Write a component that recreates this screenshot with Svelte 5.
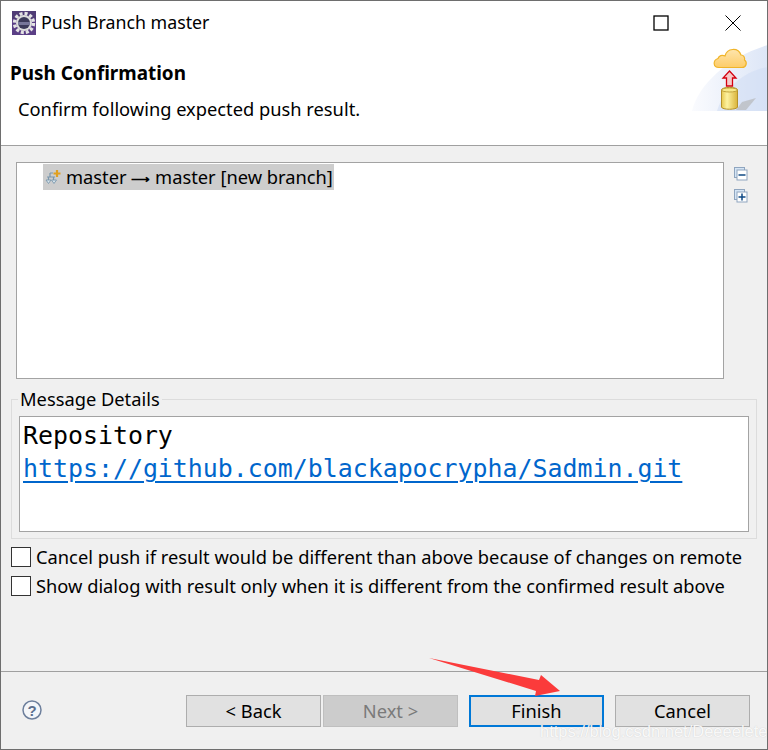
<script>
  const options = [
    'Cancel push if result would be different than above because of changes on remote',
    'Show dialog with result only when it is different from the confirmed result above'
  ];
  const buttons = [
    { label: '< Back' },
    { label: 'Next >', disabled: true },
    { label: 'Finish', primary: true },
    { label: 'Cancel' }
  ];
</script>

<div class="window">
  <div class="titlebar">
    <svg class="app-icon" width="24" height="24" viewBox="0 0 24 24">
      <rect width="24" height="24" fill="#5b3f86" />
      <path d="M0 0h24v8H0z" fill="#4a3a6c" opacity=".6" />
      <circle cx="12" cy="12" r="9.500" fill="none" stroke="#e4e4e4" stroke-width="3.400" stroke-dasharray="3 2" />
      <circle cx="12" cy="12" r="8" fill="#dcdcdc" />
      <circle cx="12" cy="12" r="6" fill="#3c3a5a" />
      <rect x="6" y="11" width="12" height="3" fill="#77769a" />
    </svg>
    <span class="title">Push Branch master</span>
    <div class="win-buttons">
      <svg width="16" height="16" viewBox="0 0 16 16"><rect x="1" y="1" width="14" height="14" fill="none" stroke="#000" stroke-width="1.300" /></svg>
      <svg width="16" height="16" viewBox="0 0 16 16"><path d="M.5.5l15 15M15.500.5l-15 15" stroke="#000" stroke-width="1" fill="none" /></svg>
    </div>
  </div>

  <div class="banner">
    <div class="banner-text">
      <h1>Push Confirmation</h1>
      <p>Confirm following expected push result.</p>
    </div>
    <svg class="wizard-art" width="75" height="68" viewBox="0 0 75 68">
      <defs>
        <linearGradient id="sky" x1="0" y1="0" x2="1" y2="0">
          <stop offset="0" stop-color="#fafbfe" />
          <stop offset="1" stop-color="#dde6f7" />
        </linearGradient>
        <linearGradient id="cloud" x1="0" y1="0" x2="0" y2="1">
          <stop offset="0" stop-color="#fee5ad" />
          <stop offset="1" stop-color="#fdcc68" />
        </linearGradient>
        <linearGradient id="can" x1="0" y1="0" x2="1" y2="0">
          <stop offset="0" stop-color="#e8c84e" />
          <stop offset=".35" stop-color="#fdf2a0" />
          <stop offset="1" stop-color="#d9b33a" />
        </linearGradient>
      </defs>
      <path d="M0 67C6 40 38 12 76 1v66z" fill="url(#sky)" />
      <path d="M25 67C32 44 52 27 76 23v44z" fill="#cfdcf4" opacity=".55" />
      <path d="M44 66l6-8 14-4-10 12z" fill="#b0b0b0" opacity=".6" />
      <path d="M27 23.500c-6 0-6.500-7-1-9 1-3 4-4 7-2.500 2-8 13-9 16-1 3 0 4 3 3.500 5 3 2 2 7.500-2.500 7.500z" fill="url(#cloud)" stroke="#f0b429" stroke-width="1.200" />
      <path d="M37.500 27l6.500 7h-3.500v8h-6v-8H31z" fill="#f6c9c9" stroke="#d4000f" stroke-width="1.300" />
      <path d="M29.500 46c0-3.500 16-3.500 16 0v17c0 3-16 3-16 0z" fill="url(#can)" stroke="#b5922a" stroke-width="1" />
      <ellipse cx="37.500" cy="46" rx="8" ry="2" fill="#f7e98a" stroke="#b5922a" stroke-width=".8" />
    </svg>
  </div>

  <div class="body">
    <div class="tree-row">
      <div class="tree">
        <div class="tree-item">
          <svg width="17" height="17" viewBox="0 0 17 17">
            <path d="M5 4h3M5 4v4M2 8h8M3.500 8v3M8.500 8v3" stroke="#7a97ad" stroke-width="1.200" fill="none" />
            <path d="M1 11h5l-2.500 3.500zM6.500 11h5L9 14.500z" fill="#dbe8ef" stroke="#7a97ad" stroke-width=".9" />
            <path d="M12 1v7M8.500 4.500h7" stroke="#e0a020" stroke-width="2.200" />
          </svg>
          <span class="label">master <span class="arrow">⟶</span> master [new branch]</span>
        </div>
      </div>
      <div class="tree-tools">
        <svg width="14" height="14" viewBox="0 0 14 14">
          <rect x=".5" y=".5" width="10" height="10" fill="#d5e5f5" stroke="#8fa5bf" />
          <rect x="3" y="3" width="10" height="10" fill="#fff" stroke="#8fa5bf" />
          <path d="M4.500 8h7" stroke="#0f4a85" stroke-width="1.500" />
        </svg>
        <svg width="14" height="14" viewBox="0 0 14 14">
          <rect x=".5" y=".5" width="10" height="10" fill="#d5e5f5" stroke="#8fa5bf" />
          <rect x="3" y="3" width="10" height="10" fill="#fff" stroke="#8fa5bf" />
          <path d="M4.500 8h7M8 4.500v7" stroke="#0f4a85" stroke-width="1.500" />
        </svg>
      </div>
    </div>

    <fieldset class="details">
      <legend>Message Details</legend>
      <div class="message">
        <div>Repository</div>
        <a href="#repo">https://github.com/blackapocrypha/Sadmin.git</a>
      </div>
    </fieldset>

    <div class="options">
      {#each options as text}
        <label class="option">
          <span class="check"></span>
          <span class="label">{text}</span>
        </label>
      {/each}
    </div>
  </div>

  <div class="footer">
    <svg class="help" width="20" height="20" viewBox="0 0 20 20">
      <circle cx="10" cy="10" r="9" fill="#f4f6f9" stroke="#6d7f9c" stroke-width="1.500" />
      <text x="10" y="15.500" text-anchor="middle" class="help-mark">?</text>
    </svg>
    <div class="actions">
      {#each buttons as b}
        <button type="button" class:primary={b.primary} disabled={b.disabled}>{b.label}</button>
      {/each}
    </div>
  </div>

  <!-- annotation drawn over the screenshot -->
  <svg class="annotation" width="140" height="46" viewBox="0 0 140 46">
    <path d="M1 2L111 24 113 19 132 35 107 40 108 35z" fill="#fb3b3b" />
  </svg>
  <span class="watermark">https://blog.csdn.net/Deeeelete</span>
</div>

<style>
  :global(body) {
    margin: 0;
    background: #f0f0f0;
  }

  .window {
    position: relative;
    width: 768px;
    height: 750px;
    box-sizing: border-box;
    border: 1px solid #6e6e6e;
    background: #f0f0f0;
    font-family: "Noto Sans", "Open Sans", sans-serif;
    font-size: 18.300px;
    color: #000;
    display: flex;
    flex-direction: column;
    overflow: hidden;
  }

  .titlebar {
    height: 43px;
    background: #fff;
    display: flex;
    align-items: center;
    padding-left: 11px;
    gap: 5px;
  }

  .title {
    font-size: 17.800px;
    line-height: 24px;
    margin-top: -2px;
  }

  .win-buttons {
    margin-left: auto;
    display: flex;
    gap: 56px;
    padding-right: 26px;
  }

  .banner {
    height: 101px;
    background: #fff;
    border-bottom: 1px solid #a0a0a0;
    display: flex;
    justify-content: space-between;
    align-items: flex-start;
  }

  .banner-text {
    padding: 17px 0 0 9px;
  }

  h1 {
    margin: 0;
    font-size: 18.900px;
    font-weight: 700;
    line-height: 24px;
  }

  .banner-text p {
    margin: 12px 0 0 8px;
    line-height: 24px;
  }

  .body {
    flex: 1;
    padding: 16px 0 0 15px;
  }

  .tree-row {
    display: flex;
  }

  .tree {
    width: 708px;
    height: 217px;
    box-sizing: border-box;
    border: 1px solid #a3a3a3;
    background: #fff;
    padding: 1px 0 0 26px;
  }

  .tree-item {
    display: inline-flex;
    align-items: center;
    gap: 4px;
    height: 26px;
    padding: 0 1px 0 2px;
    background: #cdcdcd;
    white-space: nowrap;
  }

  .label {
    padding-bottom: 2px;
  }

  .arrow {
    font-size: 13px;
    font-weight: 700;
    line-height: 1;
  }

  .tree-tools {
    display: flex;
    flex-direction: column;
    gap: 8px;
    padding: 5px 0 0 10px;
  }

  .details {
    box-sizing: border-box;
    width: 746px;
    height: 152px;
    margin: 8px 0 0 -5px;
    padding: 5px 7px 0 7px;
    border: 1px solid #dcdcdc;
    min-inline-size: 0;
  }

  legend {
    padding: 0 2px;
    margin-left: -1px;
    line-height: 24px;
  }

  .message {
    height: 116px;
    box-sizing: border-box;
    border: 1px solid #a3a3a3;
    background: #fff;
    padding: 2px 3px;
    font-family: "DejaVu Sans Mono", "Liberation Mono", monospace;
    font-size: 24.900px;
    line-height: 33px;
  }

  .message a {
    color: #0066cc;
    text-decoration: underline;
    text-decoration-thickness: 2px;
    text-underline-offset: 4px;
  }

  .options {
    margin: 6px 0 0 -5px;
    display: flex;
    flex-direction: column;
    gap: 5px;
  }

  .option {
    display: flex;
    align-items: center;
    gap: 5px;
    height: 24px;
    white-space: nowrap;
  }

  .check {
    width: 18px;
    height: 18px;
    border: 1px solid #333;
    background: #fff;
    flex: none;
  }

  .footer {
    height: 78px;
    box-sizing: border-box;
    border-top: 1px solid #a0a0a0;
    padding: 23px 17px 0 21px;
    display: flex;
    justify-content: space-between;
    align-items: flex-start;
  }

  .help {
    margin-top: 5px;
  }

  .help-mark {
    font-family: "Liberation Sans", sans-serif;
    font-weight: 700;
    font-size: 15px;
    fill: #5c6f8e;
  }

  .actions {
    display: flex;
    gap: 2px;
  }

  button {
    width: 135px;
    height: 32px;
    box-sizing: border-box;
    border: 1px solid #adadad;
    background: #e1e1e1;
    border-radius: 0;
    padding: 0 0 2px;
    font: inherit;
    color: #000;
  }

  button:disabled {
    background: #cccccc;
    border-color: #bfbfbf;
    color: #7a7a7a;
  }

  button.primary {
    border: 2px solid #0078d7;
    margin-left: 9px;
    margin-right: 9px;
  }

  .annotation {
    position: absolute;
    left: 427px;
    top: 655px;
  }

  .watermark {
    position: absolute;
    left: 539px;
    top: 721px;
    font-family: "Liberation Sans", sans-serif;
    font-size: 16.500px;
    color: rgba(255, 255, 255, 0.9);
    text-shadow: 0 0 1px rgba(160, 160, 160, 0.5);
    white-space: nowrap;
  }
</style>
